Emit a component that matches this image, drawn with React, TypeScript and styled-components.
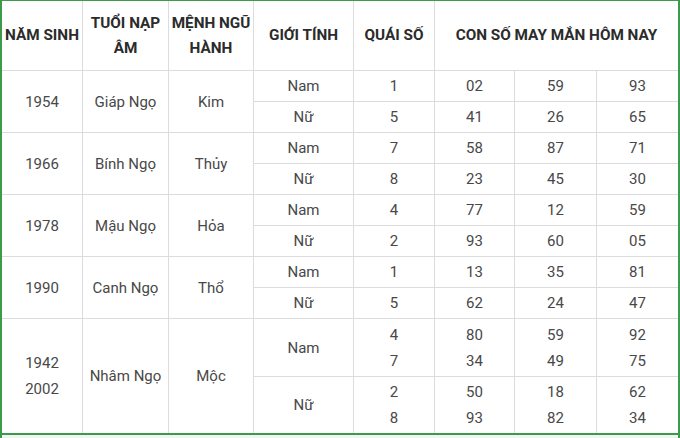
import React from "react";
import styled, { createGlobalStyle } from "styled-components";

const Global = createGlobalStyle`
  html, body { margin: 0; padding: 0; background: #fff; }
  body { font-family: Roboto, "Noto Sans", "Liberation Sans", sans-serif; }
`;

const Frame = styled.div`
  width: 680px;
  height: 438px;
  box-sizing: border-box;
  border-top: 1px solid #3c9b4b;
  border-left: 2px solid #3c9b4b;
  border-right: 2px solid #3c9b4b;
  background: #eef6ef;
  display: flex;
  flex-direction: column;
`;

const Table = styled.div`
  display: grid;
  grid-template-columns: 80px 85px 84px 99px 80px 79px 81px 81px;
  grid-template-rows: 69px repeat(8, 30px) 57px 56px;
  gap: 1px;
  background: #dcdcdf;
  border-bottom: 2px solid #3c9b4b;
`;

const Cell = styled.div<{ $rs?: number; $cs?: number }>`
  background: #fff;
  display: flex;
  flex-direction: column;
  align-items: center;
  justify-content: center;
  text-align: center;
  color: #484848;
  font-size: 15px;
  line-height: 26px;
  grid-row: span ${(p) => p.$rs ?? 1};
  grid-column: span ${(p) => p.$cs ?? 1};
`;

const Head = styled(Cell)`
  font-weight: 700;
  color: #2b2b2b;
  font-size: 15.3px;
  line-height: 25px;
`;

type Sub = { g: string; q: string[]; n: string[][] };
type Group = { year: string[]; tuoi: string; menh: string; subs: Sub[] };

const data: Group[] = [
  { year: ["1954"], tuoi: "Giáp Ngọ", menh: "Kim", subs: [
    { g: "Nam", q: ["1"], n: [["02"], ["59"], ["93"]] },
    { g: "Nữ", q: ["5"], n: [["41"], ["26"], ["65"]] },
  ] },
  { year: ["1966"], tuoi: "Bính Ngọ", menh: "Thủy", subs: [
    { g: "Nam", q: ["7"], n: [["58"], ["87"], ["71"]] },
    { g: "Nữ", q: ["8"], n: [["23"], ["45"], ["30"]] },
  ] },
  { year: ["1978"], tuoi: "Mậu Ngọ", menh: "Hỏa", subs: [
    { g: "Nam", q: ["4"], n: [["77"], ["12"], ["59"]] },
    { g: "Nữ", q: ["2"], n: [["93"], ["60"], ["05"]] },
  ] },
  { year: ["1990"], tuoi: "Canh Ngọ", menh: "Thổ", subs: [
    { g: "Nam", q: ["1"], n: [["13"], ["35"], ["81"]] },
    { g: "Nữ", q: ["5"], n: [["62"], ["24"], ["47"]] },
  ] },
  { year: ["1942", "2002"], tuoi: "Nhâm Ngọ", menh: "Mộc", subs: [
    { g: "Nam", q: ["4", "7"], n: [["80", "34"], ["59", "49"], ["92", "75"]] },
    { g: "Nữ", q: ["2", "8"], n: [["50", "93"], ["18", "82"], ["62", "34"]] },
  ] },
];

const Lines = ({ items }: { items: string[] }) => (
  <>
    {items.map((t, i) => (
      <span key={i}>{t}</span>
    ))}
  </>
);

export default function App() {
  return (
    <>
      <Global />
      <Frame>
        <Table>
          <Head>NĂM SINH</Head>
          <Head>
            <span>TUỔI NẠP</span>
            <span>ÂM</span>
          </Head>
          <Head>
            <span>MỆNH NGŨ</span>
            <span>HÀNH</span>
          </Head>
          <Head>GIỚI TÍNH</Head>
          <Head>QUÁI SỐ</Head>
          <Head $cs={3}>CON SỐ MAY MẮN HÔM NAY</Head>
          {data.map((gr, gi) => (
            <React.Fragment key={gi}>
              <Cell $rs={2}>
                <Lines items={gr.year} />
              </Cell>
              <Cell $rs={2}>{gr.tuoi}</Cell>
              <Cell $rs={2}>{gr.menh}</Cell>
              {gr.subs.map((s, si) => (
                <React.Fragment key={si}>
                  <Cell>{s.g}</Cell>
                  <Cell>
                    <Lines items={s.q} />
                  </Cell>
                  {s.n.map((col, ci) => (
                    <Cell key={ci}>
                      <Lines items={col} />
                    </Cell>
                  ))}
                </React.Fragment>
              ))}
            </React.Fragment>
          ))}
        </Table>
      </Frame>
    </>
  );
}
